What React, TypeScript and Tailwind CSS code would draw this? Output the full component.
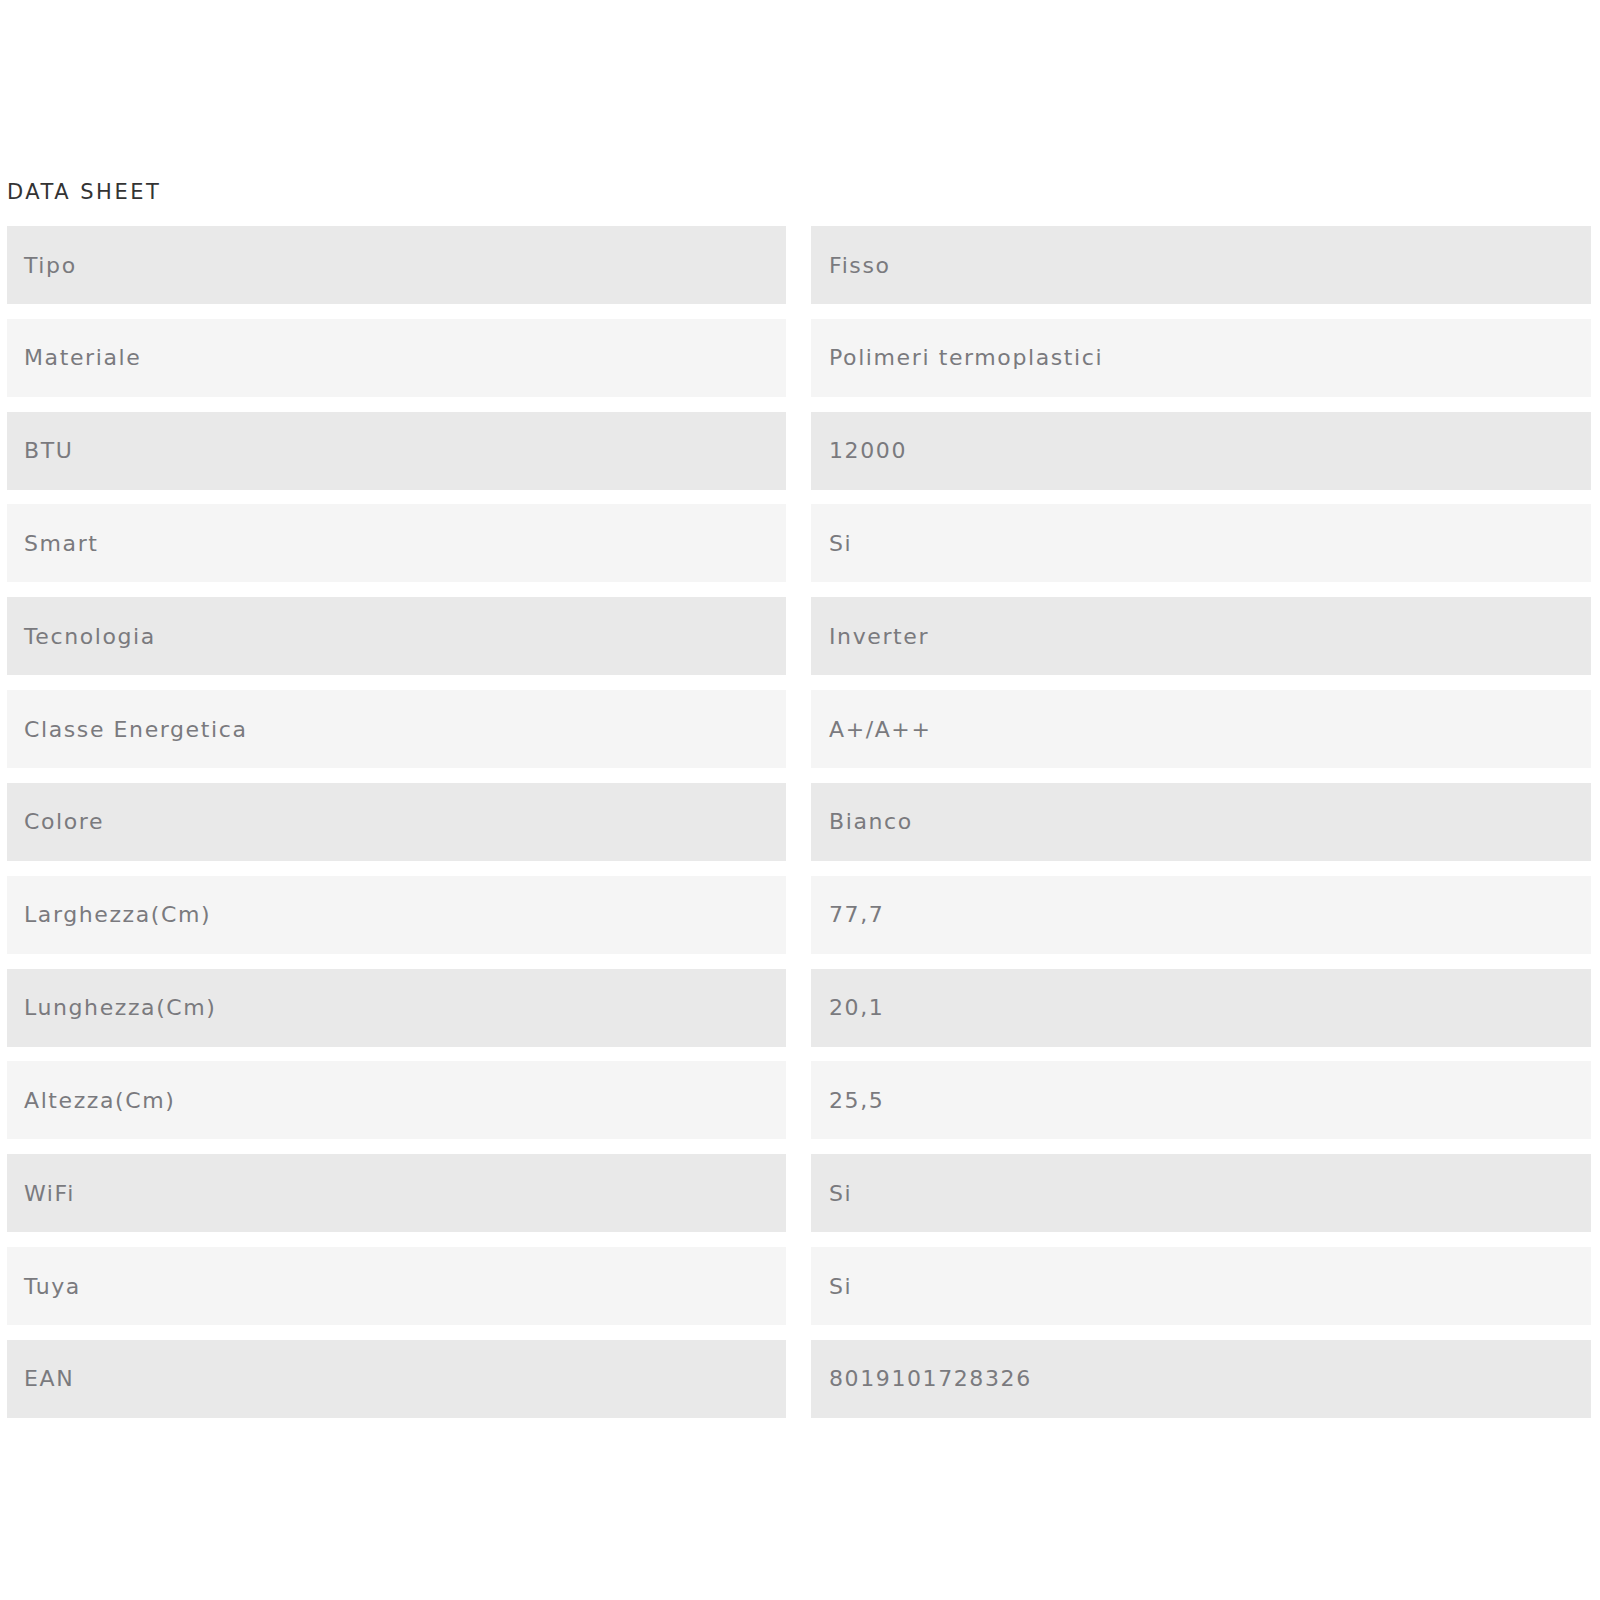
import React from "react";

const rows: [string, string][] = [
  ["Tipo", "Fisso"],
  ["Materiale", "Polimeri termoplastici"],
  ["BTU", "12000"],
  ["Smart", "Si"],
  ["Tecnologia", "Inverter"],
  ["Classe Energetica", "A+/A++"],
  ["Colore", "Bianco"],
  ["Larghezza(Cm)", "77,7"],
  ["Lunghezza(Cm)", "20,1"],
  ["Altezza(Cm)", "25,5"],
  ["WiFi", "Si"],
  ["Tuya", "Si"],
  ["EAN", "8019101728326"],
];

export default function App() {
  return (
    <div
      className="w-[1600px] h-[1600px] bg-white pl-[7px] pr-[9px] pt-[178px]"
      style={{ fontFamily: '"DejaVu Sans", "Liberation Sans", sans-serif' }}
    >
      <h2 className="text-[21px] leading-[28px] text-[#333333] tracking-[2.5px] h-[48px]">
        DATA SHEET
      </h2>
      <div className="grid grid-cols-[779px_780px] gap-x-[25px] gap-y-[14.83px]">
        {rows.map(([k, v], i) => {
          const bg = i % 2 === 0 ? "bg-[#e9e9e9]" : "bg-[#f5f5f5]";
          return (
            <React.Fragment key={k}>
              <div
                className={`${bg} h-[78px] flex items-center pl-[17px] text-[22px] text-[#7a7a7e] tracking-[1.6px]`}
              >
                {k}
              </div>
              <div
                className={`${bg} h-[78px] flex items-center pl-[18px] text-[22px] text-[#7a7a7e] tracking-[1.6px]`}
              >
                {v}
              </div>
            </React.Fragment>
          );
        })}
      </div>
    </div>
  );
}
